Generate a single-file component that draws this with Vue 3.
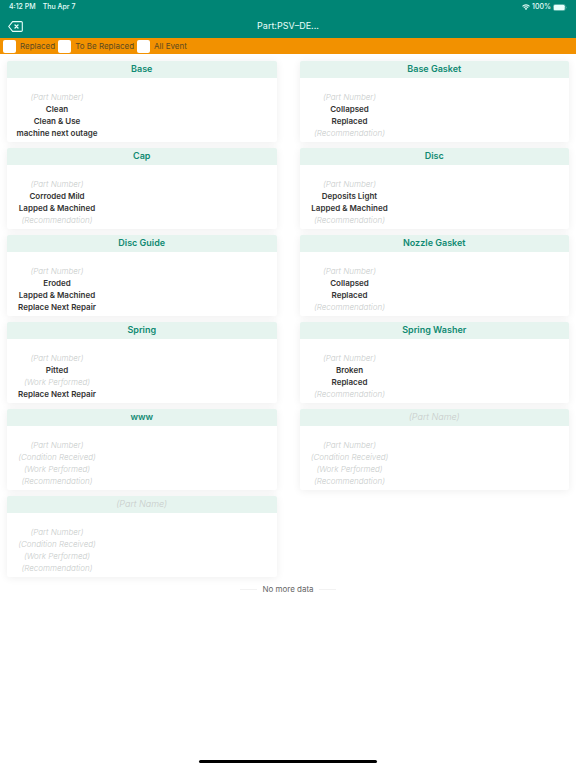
<script setup>
import { ref } from 'vue'

const filters = ref([
  { id: 'replaced', label: 'Replaced', on: false },
  { id: 'to-be-replaced', label: 'To Be Replaced', on: false },
  { id: 'all-event', label: 'All Event', on: false },
])

const parts = [
  { name: 'Base', condition: 'Clean', work: 'Clean & Use', advice: 'machine next outage' },
  { name: 'Base Gasket', condition: 'Collapsed', work: 'Replaced' },
  { name: 'Cap', condition: 'Corroded Mild', work: 'Lapped & Machined' },
  { name: 'Disc', condition: 'Deposits Light', work: 'Lapped & Machined' },
  { name: 'Disc Guide', condition: 'Eroded', work: 'Lapped & Machined', advice: 'Replace Next Repair' },
  { name: 'Nozzle Gasket', condition: 'Collapsed', work: 'Replaced' },
  { name: 'Spring', condition: 'Pitted', advice: 'Replace Next Repair' },
  { name: 'Spring Washer', condition: 'Broken', work: 'Replaced' },
  { name: 'www' },
  {},
  {},
]

const fields = [
  { key: 'number', hint: '(Part Number)' },
  { key: 'condition', hint: '(Condition Received)' },
  { key: 'work', hint: '(Work Performed)' },
  { key: 'advice', hint: '(Recommendation)' },
]
</script>

<template>
  <div class="screen">
    <header class="top">
      <div class="status">
        <span>4:12 PM</span>
        <span class="date">Thu Apr 7</span>
        <svg class="wifi" viewBox="0 0 16 12" aria-hidden="true">
          <path d="M1 4.600a9.900 9.900 0 0 1 14 0M3.600 7.400a6.200 6.200 0 0 1 8.800 0" fill="none" stroke="currentColor" stroke-width="2.300" />
          <path d="M8 12 5.400 9.400a3.700 3.700 0 0 1 5.200 0z" fill="currentColor" />
        </svg>
        <span>100%</span>
        <svg class="battery" viewBox="0 0 28 14" aria-hidden="true">
          <rect x=".5" y=".5" width="24" height="13" rx="4" fill="none" stroke="currentColor" opacity=".5" />
          <rect x="1.500" y="1.500" width="22" height="11" rx="3" fill="currentColor" />
          <path d="M26 4.500q2 2.500 0 5z" fill="currentColor" opacity=".6" />
        </svg>
      </div>
      <div class="nav">
        <button class="back" type="button" aria-label="Back">
          <svg viewBox="0 0 15 11" aria-hidden="true">
            <path d="M4.600.6H13.200a1.100 1.100 0 0 1 1.100 1.100V9.300a1.100 1.100 0 0 1-1.100 1.100H4.600L.7 5.500z" fill="none" stroke="currentColor" stroke-width="1.100" stroke-linejoin="round" />
            <path d="M7 4l3 3M10 4 7 7" fill="none" stroke="currentColor" stroke-width="1.300" stroke-linecap="round" />
          </svg>
        </button>
        <h1 class="title">Part:PSV–DE...</h1>
      </div>
    </header>

    <div class="filters">
      <label v-for="f in filters" :key="f.id" class="filter" :for="f.id">
        <input :id="f.id" v-model="f.on" class="tick" type="checkbox" />
        <span>{{ f.label }}</span>
      </label>
    </div>

    <main class="list">
      <section v-for="(part, i) in parts" :key="i" class="card">
        <h2 class="name" :class="{ hint: !part.name }">{{ part.name || '(Part Name)' }}</h2>
        <div class="details">
          <p v-for="f in fields" :key="f.key" class="line" :class="{ hint: !part[f.key] }">
            {{ part[f.key] || f.hint }}
          </p>
        </div>
      </section>
    </main>

    <p class="end">No more data</p>
    <div class="home"></div>
  </div>
</template>

<style>
body {
  margin: 0;
  background: #fff;
}
</style>

<style scoped>
.screen {
  display: flex;
  flex-direction: column;
  min-height: 100vh;
  font-family: Inter, "Liberation Sans", sans-serif;
  font-size: 8px;
  line-height: 12px;
  color: #333;
}
.top {
  background: #008575;
  color: #e8fffb;
}
.status {
  display: flex;
  align-items: center;
  height: 14px;
  padding: 0 9px;
  font-size: 7px;
  font-weight: 500;
}
.date {
  margin-left: 7px;
  margin-right: auto;
}
.wifi {
  width: 8px;
  height: 6px;
  margin-right: 2px;
}
.battery {
  width: 14px;
  height: 7px;
  margin-left: 2px;
}
.nav {
  display: grid;
  grid-template-columns: 1fr auto 1fr;
  align-items: center;
  height: 24px;
  padding: 0 8px;
}
.back {
  display: flex;
  justify-self: start;
  padding: 0;
  border: 0;
  background: none;
  color: inherit;
}
.back svg {
  width: 15px;
  height: 11px;
}
.title {
  margin: 0;
  font-size: 9px;
  font-weight: 400;
}
.filters {
  display: flex;
  gap: 3px;
  height: 16px;
  padding: 0 3px;
  background: #f29100;
  color: #5c4a20;
}
.filter {
  display: flex;
  align-items: center;
  gap: 4px;
}
.tick {
  appearance: none;
  width: 13px;
  height: 13px;
  margin: 0;
  border-radius: 2px;
  background: #fff;
}
.tick:checked {
  background: #008575;
}
.list {
  display: grid;
  grid-template-columns: 1fr 1fr;
  gap: 6px 23px;
  padding: 7px 7px 6px;
}
.card {
  border-radius: 2px;
  background: #fff;
  box-shadow: 0 1px 8px rgba(0, 0, 0, 0.07);
}
.name {
  margin: 0;
  padding-bottom: 2px;
  border-radius: 2px 2px 0 0;
  background: #e6f4ef;
  color: #108a72;
  font-size: 9px;
  font-weight: 600;
  line-height: 15px;
  text-align: center;
}
.details {
  width: 100px;
  padding: 13px 0 3px;
}
.line {
  margin: 0;
  font-weight: 600;
  text-align: center;
  white-space: nowrap;
}
.hint {
  color: #c8cccb;
  font-style: italic;
  font-weight: 300;
}
.end {
  display: flex;
  align-items: center;
  justify-content: center;
  gap: 5px;
  margin: 0;
  color: #666;
}
.end::before,
.end::after {
  content: "";
  width: 17px;
  height: 1px;
  background: #f2f2f2;
}
.home {
  width: 31%;
  height: 3px;
  margin: auto auto 5px;
  border-radius: 2px;
  background: #000;
}
</style>
